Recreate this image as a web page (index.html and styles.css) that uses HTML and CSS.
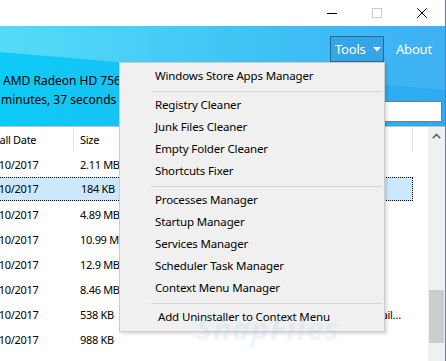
FILE: index.html
```html
<!DOCTYPE html>
<html>
<head>
<meta charset="utf-8">
<link rel="stylesheet" href="styles.css">
</head>
<body>
<div class="window">
  <div class="titlebar">
    <div class="caption">
      <span class="cbtn"><svg width="10" height="10" viewBox="0 0 10 10"><path d="M0 5.5H10" stroke="#000" stroke-width="1"/></svg></span>
      <span class="cbtn"><svg width="10" height="10" viewBox="0 0 10 10"><rect x="0.5" y="0.5" width="9" height="9" fill="none" stroke="#cccccc" stroke-width="1"/></svg></span>
      <span class="cbtn"><svg width="10" height="10" viewBox="0 0 10 10"><path d="M0.3 0.3L9.7 9.7M9.7 0.3L0.3 9.7" stroke="#000" stroke-width="1"/></svg></span>
    </div>
  </div>
  <div class="banner">
    <div class="nav">
      <span class="tools"><span>Tools</span><svg class="caret" width="8" height="5" viewBox="0 0 8 5"><path d="M0 0H8L4 4.5Z" fill="#fff"/></svg></span>
      <span class="about">About</span>
    </div>
    <div class="info">
      <div class="line1">AMD Radeon HD 7560D</div>
      <div class="line2">
        <span class="uptime">minutes, 37 seconds</span>
        <span class="search"></span>
      </div>
    </div>
  </div>
  <div class="listarea">
    <div class="viewport">
      <div class="list">
        <div class="row head">
          <div class="c date">Install Date</div>
          <div class="c size">Size</div>
          <div class="c desc"></div>
        </div>
        <div class="row"><div class="c date">24/10/2017</div><div class="c size">2.11 MB</div><div class="c desc"></div></div>
        <div class="row sel"><div class="c date">24/10/2017</div><div class="c size">184 KB</div><div class="c desc"></div></div>
        <div class="row"><div class="c date">24/10/2017</div><div class="c size">4.89 MB</div><div class="c desc"></div></div>
        <div class="row"><div class="c date">24/10/2017</div><div class="c size">10.99 MB</div><div class="c desc"></div></div>
        <div class="row"><div class="c date">24/10/2017</div><div class="c size">12.9 MB</div><div class="c desc"></div></div>
        <div class="row"><div class="c date">24/10/2017</div><div class="c size">8.46 MB</div><div class="c desc"></div></div>
        <div class="row"><div class="c date">24/10/2017</div><div class="c size">538 KB</div><div class="c desc">Uninstall detail…</div></div>
        <div class="row"><div class="c date">24/10/2017</div><div class="c size">988 KB</div><div class="c desc"></div></div>
        <div class="row"><div class="c date"></div><div class="c size"></div><div class="c desc"></div></div>
      </div>
    </div>
    <div class="scrollbar">
      <div class="arrow"><svg width="9" height="6" viewBox="0 0 9 6"><path d="M0.8 5.2L4.5 1.5L8.2 5.2" fill="none" stroke="#606060" stroke-width="1.6"/></svg></div>
      <div class="track"><div class="thumb"></div></div>
    </div>
  </div>

  <div class="menu">
    <div class="mi">Windows Store Apps Manager</div>
    <div class="sep"></div>
    <div class="mi">Registry Cleaner</div>
    <div class="mi">Junk Files Cleaner</div>
    <div class="mi">Empty Folder Cleaner</div>
    <div class="mi">Shortcuts Fixer</div>
    <div class="sep"></div>
    <div class="mi">Processes Manager</div>
    <div class="mi">Startup Manager</div>
    <div class="mi">Services Manager</div>
    <div class="mi">Scheduler Task Manager</div>
    <div class="mi">Context Menu Manager</div>
    <div class="sep"></div>
    <div class="mi add">Add Uninstaller to Context Menu</div>
  </div>
  <div class="watermark">SnapFiles</div>
</div>
</body>
</html>
```
FILE: styles.css
```css
* { box-sizing: border-box; }
html, body { margin: 0; padding: 0; }
body {
  width: 446px;
  height: 361px;
  overflow: hidden;
  font-family: "Noto Sans", "Open Sans", sans-serif;
  font-size: 12px;
  color: #000;
  background: #fff;
}
.window {
  position: relative;
  width: 446px;
  height: 361px;
  border-right: 1px solid #3a8ad0;
  overflow: hidden;
  display: flex;
  flex-direction: column;
}
.titlebar {
  height: 26px;
  flex: none;
  background: #fff;
  display: flex;
  justify-content: flex-end;
}
.caption { display: flex; }
.cbtn {
  width: 45px;
  height: 26px;
  display: flex;
  align-items: center;
  justify-content: center;
}
.cbtn:last-child { width: 46px; }
.banner {
  position: relative;
  height: 101px;
  flex: none;
  background: linear-gradient(to right, #0ccbf6 0%, #1fbdf4 45%, #2fa9f1 100%);
  border-bottom: 1px solid #b9c3c9;
  padding-top: 10px;
  overflow: hidden;
}
.banner::before {
  content: "";
  position: absolute;
  left: 0; top: 0; right: 0; bottom: 0;
  background: linear-gradient(to right, rgba(255,255,255,0.3), rgba(255,255,255,0.12) 60%, rgba(255,255,255,0.08));
  clip-path: polygon(0 0, 100% 0, 100% 64px, 0 26px);
}
.nav {
  position: relative;
  display: flex;
  justify-content: flex-end;
  align-items: center;
  height: 26px;
  padding-right: 17px;
  color: #fff;
  font-size: 13px;
  letter-spacing: -0.2px;
}
.tools {
  height: 26px;
  width: 54px;
  display: flex;
  align-items: center;
  justify-content: space-between;
  padding: 0 2px 0 4px;
  border: 1px solid #2d6a93;
  background: rgba(20, 110, 190, 0.25);
  margin-right: 12px;
}
.caret { margin-top: 1px; }
.about { width: 32px; white-space: nowrap; }
.info { position: relative; margin-top: 11px; }
.line1 {
  line-height: 16px;
  padding-left: 3px;
}
.line2 {
  display: flex;
  justify-content: space-between;
  align-items: flex-start;
}
.uptime { line-height: 16px; margin-top: 3px; padding-left: 1px; }
.search {
  width: 58px;
  height: 21px;
  margin-top: 12px;
  margin-right: 3px;
  background: #fff;
  border: 1px solid #7a7a7a;
}
.listarea {
  flex: 1;
  display: flex;
  min-height: 0;
}
.viewport {
  flex: 1;
  overflow: hidden;
}
.list {
  margin-left: -22px;
  width: 435px;
  font-size: 11px;
  letter-spacing: -0.3px;
}
.row {
  display: flex;
  height: 25px;
  line-height: 25px;
  white-space: nowrap;
}
.row.sel {
  height: 24px;
  line-height: 22px;
  margin-bottom: 1px;
  background: #cce8ff;
  border: 1px dotted #000;
}
.row.sel .c.date { padding-left: 4px; }
.row.sel .c.size { padding-left: 6px; }
.c { overflow: hidden; }
.c.date { width: 96px; padding-left: 5px; }
.c.size { width: 90px; padding-left: 6px; }
.c.desc { flex: 1; text-align: right; padding-right: 12px; }
.head .c.date { border-right: 1px solid #e5e5e5; padding-left: 3px; }
.head .c.size { border-right: 1px solid #e5e5e5; }
.head .c.desc { border-right: 1px solid #e5e5e5; }
.scrollbar {
  width: 17px;
  flex: none;
  background: #f0f0f0;
  display: flex;
  flex-direction: column;
}
.arrow {
  height: 17px;
  display: flex;
  align-items: center;
  justify-content: center;
}
.track { flex: 1; padding-top: 146px; }
.thumb { height: 53px; margin: 0 1px; background: #cdcdcd; }
.menu {
  position: absolute;
  left: 119px;
  top: 62px;
  width: 266px;
  background: #f0f0f0;
  border: 1px solid #cccccc;
  box-shadow: 2px 2px 3px rgba(0,0,0,0.15);
  padding: 2px 2px 3px 2px;
  font-size: 11.5px;
  letter-spacing: -0.15px;
}
.mi {
  height: 22px;
  line-height: 22px;
  padding-left: 33px;
  white-space: nowrap;
}
.mi.add { padding-left: 36px; }
.sep {
  height: 7px;
  padding-top: 4px;
  margin-left: 29px;
}
.sep:first-of-type { height: 8px; }
.sep::after {
  content: "";
  display: block;
  height: 1px;
  background: #d7d7d7;
}
.watermark {
  position: absolute;
  left: 196px;
  top: 308px;
  font-size: 30px;
  font-weight: bold;
  font-style: italic;
  color: rgba(170, 205, 235, 0.2);
  letter-spacing: 1px;
  pointer-events: none;
}
```
